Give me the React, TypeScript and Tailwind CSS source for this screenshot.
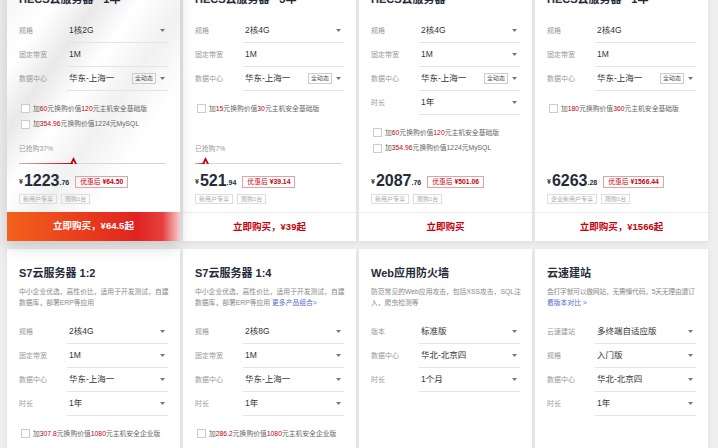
import React from "react";

const RED = "text-[#c7000b]";

function Caret() {
  return (
    <svg width="5" height="3" viewBox="0 0 5 3" className="shrink-0">
      <path d="M0 0h5L2.5 3z" fill="#777" />
    </svg>
  );
}

type RowT = { label: string; value: string; tag?: string; arrow?: boolean };

function SelRow({ label, value, tag, arrow = true }: RowT) {
  return (
    <div className="flex h-[24px] items-stretch">
      <div className="w-[48px] flex items-center text-[7px] text-[#999]">{label}</div>
      <div className="flex-1 flex items-center border-b border-[#e4e4e4] pl-[2px] pr-[3px]">
        <span className="flex-1 text-[8.5px] text-[#333] whitespace-nowrap">{value}</span>
        {tag && (
          <span className="border border-[#ccc] text-[6px] px-[2px] h-[11px] leading-[9px] text-[#555] mr-[4px]">
            {tag}
          </span>
        )}
        {arrow && <Caret />}
      </div>
    </div>
  );
}

function Check({ children }: { children: React.ReactNode }) {
  return (
    <div className="flex items-center h-[15.5px] pl-[2px]">
      <span className="w-[9px] h-[9px] border border-[#ccc] bg-white mr-[3px] shrink-0" />
      <span className="text-[6.8px] text-[#666] whitespace-nowrap">{children}</span>
    </div>
  );
}

function R({ children }: { children: React.ReactNode }) {
  return <span className={RED}>{children}</span>;
}

function Progress({ pct }: { pct: number }) {
  return (
    <div className="flex flex-col">
      <div className="h-[12px] leading-[12px] text-[6.8px] text-[#999]">已抢购{pct}%</div>
      <div className="relative h-[10px] mt-[2px] mr-[2px]">
        <div className="absolute left-0 right-0 top-[6px] h-[1px] bg-[#d6d6d6]" />
        <div
          className="absolute left-0 top-[5.5px] h-[1.5px] bg-[linear-gradient(90deg,rgba(199,0,11,0.15),#c7000b)]"
          style={{ width: `${pct}%` }}
        />
        <svg
          width="7"
          height="7"
          viewBox="0 0 7 7"
          className="absolute top-[0px]"
          style={{ left: `calc(${pct}% - 3.5px)` }}
        >
          <path d="M0 7L3.5 0L7 7L5 7L3.5 4L2 7Z" fill="#c7000b" />
        </svg>
      </div>
    </div>
  );
}

type TopCard = {
  title: string;
  rows: RowT[];
  checks: React.ReactNode[];
  pct?: number;
  price: string;
  cents: string;
  disc: string;
  tags: string[];
  btn: string;
  active?: boolean;
};

const topCards: TopCard[] = [
  {
    title: "HECS云服务器 · 1年",
    rows: [
      { label: "规格", value: "1核2G" },
      { label: "固定带宽", value: "1M", arrow: false },
      { label: "数据中心", value: "华东-上海一", tag: "全动态" },
    ],
    checks: [
      <>加<R>60</R>元换购价值<R>120</R>元主机安全基础版</>,
      <>加<R>354.96</R>元换购价值1224元MySQL</>,
    ],
    pct: 37,
    price: "1223",
    cents: ".76",
    disc: "¥64.50",
    tags: ["新用户专享", "限购1台"],
    btn: "立即购买，¥64.5起",
    active: true,
  },
  {
    title: "HECS云服务器 · 3年",
    rows: [
      { label: "规格", value: "2核4G" },
      { label: "固定带宽", value: "1M", arrow: false },
      { label: "数据中心", value: "华东-上海一", tag: "全动态" },
    ],
    checks: [<>加<R>15</R>元换购价值<R>30</R>元主机安全基础版</>],
    pct: 7,
    price: "521",
    cents: ".94",
    disc: "¥39.14",
    tags: ["新用户专享", "限购1台"],
    btn: "立即购买，¥39起",
  },
  {
    title: "HECS云服务器",
    rows: [
      { label: "规格", value: "2核4G" },
      { label: "固定带宽", value: "1M" },
      { label: "数据中心", value: "华东-上海一", tag: "全动态" },
      { label: "时长", value: "1年" },
    ],
    checks: [
      <>加<R>60</R>元换购价值<R>120</R>元主机安全基础版</>,
      <>加<R>354.96</R>元换购价值1224元MySQL</>,
    ],
    price: "2087",
    cents: ".76",
    disc: "¥501.06",
    tags: ["新用户专享", "限购1台"],
    btn: "立即购买",
  },
  {
    title: "HECS云服务器 · 1年",
    rows: [
      { label: "规格", value: "2核4G", arrow: false },
      { label: "固定带宽", value: "1M", arrow: false },
      { label: "数据中心", value: "华东-上海一", tag: "全动态" },
    ],
    checks: [<>加<R>180</R>元换购价值<R>360</R>元主机安全基础版</>],
    price: "6263",
    cents: ".28",
    disc: "¥1566.44",
    tags: ["企业新用户专享", "限购1台"],
    btn: "立即购买，¥1566起",
  },
];

function TopCardView({ c }: { c: TopCard }) {
  return (
    <div
      className={
        "w-[173px] h-[263px] flex flex-col relative " +
        (c.active
          ? "bg-[linear-gradient(125deg,#f4f4f4_0%,#ffffff_18%,#e9e9e9_30%,#ffffff_42%,#f1f1f1_55%,#ffffff_70%,#ffffff_100%)] shadow-[0_6px_14px_rgba(0,0,0,0.16)] z-10"
          : "bg-white shadow-[0_2px_6px_rgba(0,0,0,0.07)]")
      }
    >
      <div className="flex flex-col flex-1 pl-[12px] pr-[12px] pt-[14px]">
        <div className="h-[14px] leading-[14px] text-[11px] font-bold text-[#252b3a] whitespace-nowrap">
          {c.title}
        </div>
        <div className="mt-[13px] flex flex-col">
          {c.rows.map((r, i) => (
            <SelRow key={i} {...r} />
          ))}
        </div>
        <div className="mt-[10px] flex flex-col">
          {c.checks.map((ch, i) => (
            <Check key={i}>{ch}</Check>
          ))}
        </div>
        <div className="flex-1" />
        {c.pct !== undefined && <Progress pct={c.pct} />}
        <div className="mt-[6px] h-[16px] flex items-end">
          <span className="text-[7px] text-[#252b3a] mb-[2px] mr-[1px] font-bold">¥</span>
          <span className="text-[16px] leading-[16px] font-bold text-[#252b3a]">{c.price}</span>
          <span className="text-[7px] text-[#252b3a] mb-[1px] font-bold">{c.cents}</span>
          <span className="ml-[6px] mb-[1px] h-[12px] leading-[10px] border border-[#e8a0a4] px-[4px] text-[6.8px] text-[#c7000b] whitespace-nowrap">
            优惠后 <span className="font-bold">{c.disc}</span>
          </span>
        </div>
        <div className="mt-[5px] h-[10px] flex gap-[4px]">
          {c.tags.map((t) => (
            <span
              key={t}
              className="border border-[#ddd] h-[10px] leading-[8px] px-[3px] text-[6px] text-[#aaa] whitespace-nowrap"
            >
              {t}
            </span>
          ))}
        </div>
        <div className="h-[8px]" />
      </div>
      {c.active ? (
        <div className="h-[29px] flex items-center justify-center bg-[linear-gradient(90deg,#f2621c_0%,#ea3f1d_40%,#e12320_75%,#e6403e_90%,#f4cfcf_100%)] text-white text-[9.5px] font-bold">
          {c.btn}
        </div>
      ) : (
        <div className="h-[29px] flex items-center justify-center border-t border-[#ececec] text-[#c7000b] text-[9.5px] font-bold">
          {c.btn}
        </div>
      )}
    </div>
  );
}

type BotCard = {
  title: string;
  desc: React.ReactNode;
  rows: RowT[];
  check?: React.ReactNode;
};

const LINK = "text-[#526ecc]";

const botCards: BotCard[] = [
  {
    title: "S7云服务器 1:2",
    desc: (
      <>
        中小企业优选，高性价比，适用于开发测试，自建
        <br />
        数据库，部署ERP等应用
      </>
    ),
    rows: [
      { label: "规格", value: "2核4G" },
      { label: "固定带宽", value: "1M" },
      { label: "数据中心", value: "华东-上海一" },
      { label: "时长", value: "1年" },
    ],
    check: <>加<R>307.8</R>元换购价值<R>1080</R>元主机安全企业版</>,
  },
  {
    title: "S7云服务器 1:4",
    desc: (
      <>
        中小企业优选，高性价比，适用于开发测试，自建
        <br />
        数据库，部署ERP等应用 <span className={LINK}>更多产品组合&gt;</span>
      </>
    ),
    rows: [
      { label: "规格", value: "2核8G" },
      { label: "固定带宽", value: "1M" },
      { label: "数据中心", value: "华东-上海一" },
      { label: "时长", value: "1年" },
    ],
    check: <>加<R>286.2</R>元换购价值<R>1080</R>元主机安全企业版</>,
  },
  {
    title: "Web应用防火墙",
    desc: (
      <>
        防范常见的Web应用攻击，包括XSS攻击，SQL注
        <br />
        入，爬虫检测等
      </>
    ),
    rows: [
      { label: "版本", value: "标准版" },
      { label: "数据中心", value: "华北-北京四" },
      { label: "时长", value: "1个月" },
    ],
  },
  {
    title: "云速建站",
    desc: (
      <>
        <span className="tracking-[-0.25px]">会打字就可以做网站，无需懂代码，5天无理由退订</span>
        <br />
        <span className={LINK}>看版本对比 &gt;</span>
      </>
    ),
    rows: [
      { label: "云速建站", value: "多终端自适应版" },
      { label: "规格", value: "入门版" },
      { label: "数据中心", value: "华北-北京四" },
      { label: "时长", value: "1年" },
    ],
  },
];

function BotCardView({ c }: { c: BotCard }) {
  return (
    <div className="w-[173px] h-[230px] bg-white shadow-[0_2px_6px_rgba(0,0,0,0.07)] flex flex-col pl-[12px] pr-[12px] pt-[17px]">
      <div className="h-[14px] leading-[14px] text-[11px] font-bold text-[#252b3a] whitespace-nowrap">
        {c.title}
      </div>
      <div className="mt-[6px] text-[6.8px] leading-[11px] text-[#888] whitespace-nowrap">{c.desc}</div>
      <div className="mt-[12px] flex flex-col">
        {c.rows.map((r, i) => (
          <SelRow key={i} {...r} />
        ))}
      </div>
      {c.check && (
        <div className="mt-[10px]">
          <Check>{c.check}</Check>
        </div>
      )}
    </div>
  );
}

export default function App() {
  return (
    <div className="w-[718px] h-[448px] overflow-hidden bg-[#eeeeee] font-['Liberation_Sans','Noto_Sans_CJK_SC',sans-serif]">
      <div className="flex flex-col gap-[8px] pl-[7px] mt-[-22px]">
        <div className="flex gap-[3px]">
          {topCards.map((c, i) => (
            <TopCardView key={i} c={c} />
          ))}
        </div>
        <div className="flex gap-[3px]">
          {botCards.map((c, i) => (
            <BotCardView key={i} c={c} />
          ))}
        </div>
      </div>
    </div>
  );
}
